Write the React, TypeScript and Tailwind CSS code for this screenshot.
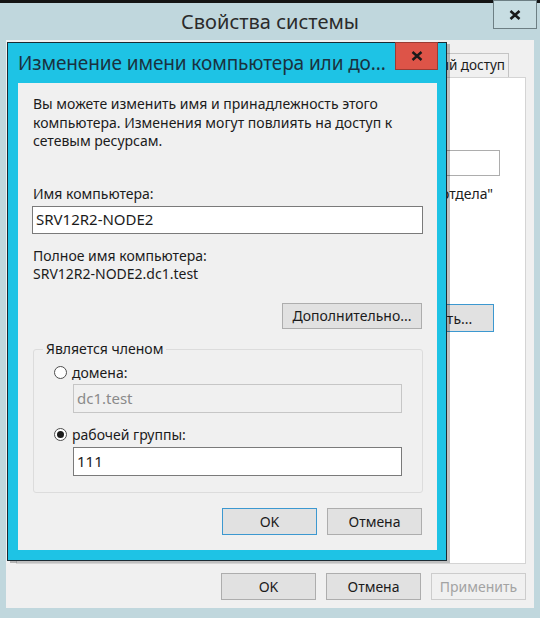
import React from 'react'

function Button({ label, primary, disabled, className }: { label: string; primary?: boolean; disabled?: boolean; className?: string }) {
  return (
    <div
      className={
        'h-[27px] w-[95px] flex items-center justify-center border text-[14px] ' +
        (disabled
          ? 'border-[#cccccc] bg-[#f0f0f0] text-[#a3a3a3] '
          : primary
            ? 'border-[#3c98d0] bg-[#e1e1e1] text-[#1b1b1b] '
            : 'border-[#adadad] bg-[#e1e1e1] text-[#1b1b1b] ') +
        (className ?? '')
      }
    >
      {label}
    </div>
  )
}

function Radio({ checked }: { checked?: boolean }) {
  return (
    <span className="w-[13px] h-[13px] rounded-full border border-[#4d4d4d] bg-white flex items-center justify-center shrink-0">
      {checked && <span className="w-[7px] h-[7px] rounded-full bg-[#1b1b1b]" />}
    </span>
  )
}

function ChangeNameDialog() {
  return (
    <div className="absolute left-[7px] top-[42px] w-[440px] h-[519px] border border-[#1b2b33] bg-[#1ec3e5] flex flex-col shadow-[3px_2px_0_rgba(0,0,0,0.25)]">
      <div className="h-[40px] relative flex items-center pl-[10px]">
        <span className="text-[19px] text-[#1a3240] tracking-[-0.1px]">Изменение имени компьютера или до...</span>
        <div className="absolute right-[8px] top-[-1px] w-[43px] h-[28px] bg-[#dd5448] border border-[#9b3b33] flex items-center justify-center">
          <svg width="12" height="10" viewBox="0 0 12 10">
            <path d="M1.5 1 L10.5 9 M10.5 1 L1.5 9" stroke="#1a1a1a" strokeWidth="2.4" />
          </svg>
        </div>
      </div>

      <div className="flex-1 ml-[10px] mr-[9px] mb-[10px] bg-[#f0f0f0] flex flex-col px-[14px] pt-[12px] text-[14px] text-[#1b1b1b]">
        <p className="leading-[18.5px] pl-[1px]">
          Вы можете изменить имя и принадлежность этого
          <br />
          компьютера. Изменения могут повлиять на доступ к
          <br />
          сетевым ресурсам.
        </p>

        <div className="mt-[34px] leading-[18px] pl-[1px]">Имя компьютера:</div>
        <div className="mt-[3px] h-[28px] border border-[#7a7a7a] bg-white flex items-center pl-[3px] text-[15px]">
          SRV12R2-NODE2
        </div>

        <div className="mt-[13px] leading-[18px] pl-[1px]">Полное имя компьютера:</div>
        <div className="leading-[18px] pl-[1px]">SRV12R2-NODE2.dc1.test</div>

        <div className="mt-[20px] flex justify-end">
          <div className="h-[26px] w-[140px] mr-[1px] border border-[#adadad] bg-[#e1e1e1] flex items-center justify-center">
            Дополнительно...
          </div>
        </div>

        <div className="mt-[20px] relative h-[144px] border border-[#dcdcdc] rounded-[3px] ml-[1px] flex flex-col pl-[20px] pr-[20px]">
          <span className="absolute left-[9px] top-[-10px] bg-[#f0f0f0] px-[3px] leading-[18px]">Является членом</span>
          <div className="mt-[14px] flex items-center gap-[5px] leading-[18px]">
            <Radio />
            <span>домена:</span>
          </div>
          <div className="mt-[2px] ml-[19px] h-[29px] border border-[#c6c6c6] bg-[#f0f0f0] flex items-center pl-[3px] text-[15px] text-[#8a8a8a]">
            dc1.test
          </div>
          <div className="mt-[13px] flex items-center gap-[5px] leading-[18px]">
            <Radio checked />
            <span>рабочей группы:</span>
          </div>
          <div className="mt-[3px] ml-[19px] h-[29px] border border-[#7a7a7a] bg-white flex items-center pl-[3px] text-[15px]">
            111
          </div>
        </div>

        <div className="mt-[15px] flex justify-end gap-[10px] pr-[1px]">
          <Button label="OK" primary />
          <Button label="Отмена" />
        </div>
      </div>
    </div>
  )
}

export default function App() {
  return (
    <div className="w-[540px] h-[618px] bg-[#141414] pt-[3px] relative overflow-hidden font-['Noto_Sans','Open_Sans',sans-serif]">
      <div className="h-[615px] bg-[#c0d7dd] flex flex-col px-[6px] pb-[10px]">
        <div className="h-[37px] relative flex items-center justify-center">
          <span className="text-[20px] text-[#2b2b2b]">Свойства системы</span>
          <div className="absolute right-[-3px] top-[-3px] w-[44px] h-[29px] border border-[#6d7f84] bg-[#c7dde2] flex items-center justify-center">
            <svg width="12" height="10" viewBox="0 0 12 10">
              <path d="M1.5 1 L10.5 9 M10.5 1 L1.5 9" stroke="#1a1a1a" strokeWidth="2.6" />
            </svg>
          </div>
        </div>

        <div className="flex-1 bg-[#f0f0f0] flex flex-col pt-[13px] pl-[10px] pr-[8px] pb-[8px]">
          {/* tabs hidden behind the dialog keep their shape only */}
          <div className="h-[24px] flex justify-end pr-[17px] text-[13.5px] text-[#1b1b1b]">
            <div className="w-[100px] border border-b-0 border-[#d9d9d9] bg-[#f0f0f0]" />
            <div className="w-[90px] border border-b-0 border-l-0 border-[#d9d9d9] bg-[#f0f0f0]" />
            <div className="w-[100px] border border-b-0 border-l-0 border-[#d9d9d9] bg-[#f0f0f0]" />
            <div className="pl-[6px] pr-[3px] border border-b-0 border-l-0 border-[#c4c4c4] bg-[#f0f0f0] flex items-center">Удаленный доступ</div>
          </div>
          <div className="h-[487px] border border-[#d4d4d4] bg-white flex flex-col items-end pr-[25px] text-[14px] text-[#1b1b1b]">
            <div className="mt-[72px] w-[380px] h-[26px] border border-[#adadad] bg-white" />
            <div className="mt-[9px] mr-[7px] leading-[18px]">Например: "Компьютер отдела"</div>
            <div className="mt-[101px] mr-[6px] h-[28px] w-[122px] border border-[#3c98d0] bg-[#e1e1e1] flex items-center justify-center">
              Изменить...
            </div>
          </div>
          <div className="mt-[9px] flex justify-end gap-[10px]">
            <Button label="OK" />
            <Button label="Отмена" />
            <Button label="Применить" disabled />
          </div>
        </div>
      </div>

      <ChangeNameDialog />
    </div>
  )
}
